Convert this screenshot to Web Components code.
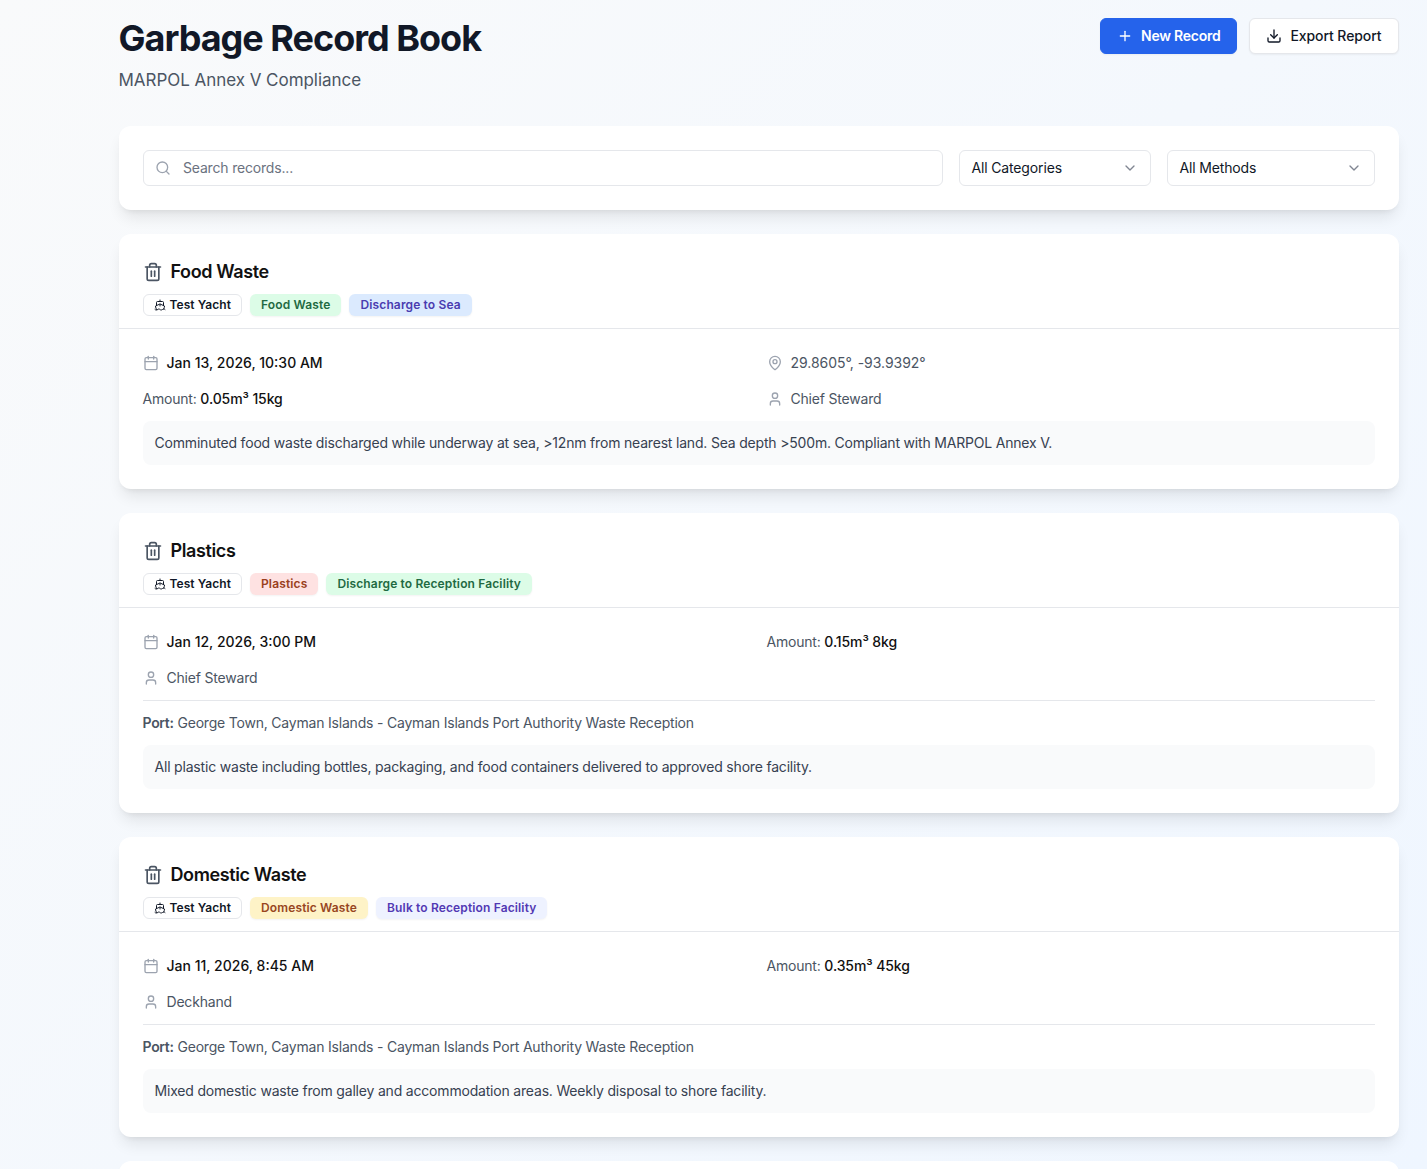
<!DOCTYPE html>
<html lang="en">
<head>
<meta charset="utf-8">
<title>Garbage Record Book</title>
<style>
	html, body { margin: 0; height: 1169px; overflow: hidden; }
	body {
		background: linear-gradient(135deg, #f9fafb 0%, #eff6ff 100%);
		font-family: Inter, "Liberation Sans", sans-serif;
		color: #111827;
	}
</style>
</head>
<body>
<record-book>
	<page-head slot="head" heading="Garbage Record Book" subtitle="MARPOL Annex V Compliance">
		<action-button variant="primary" icon="plus">New Record</action-button>
		<action-button icon="download">Export Report</action-button>
	</page-head>

	<filter-bar></filter-bar>

	<record-card heading="Food Waste">
		<tag-badge slot="badges" tone="outline" icon="ship">Test Yacht</tag-badge>
		<tag-badge slot="badges" tone="green">Food Waste</tag-badge>
		<tag-badge slot="badges" tone="blue">Discharge to Sea</tag-badge>
		<detail-grid>
			<detail-item icon="calendar" strong>Jan 13, 2026, 10:30 AM</detail-item>
			<detail-item icon="pin" numeric>29.8605°, -93.9392°</detail-item>
			<detail-item label="Amount:" strong>0.05m³ 15kg</detail-item>
			<detail-item icon="user">Chief Steward</detail-item>
		</detail-grid>
		<note-box>Comminuted food waste discharged while underway at sea, &gt;12nm from nearest land. Sea depth &gt;500m. Compliant with MARPOL Annex V.</note-box>
	</record-card>

	<record-card heading="Plastics">
		<tag-badge slot="badges" tone="outline" icon="ship">Test Yacht</tag-badge>
		<tag-badge slot="badges" tone="red">Plastics</tag-badge>
		<tag-badge slot="badges" tone="green">Discharge to Reception Facility</tag-badge>
		<detail-grid>
			<detail-item icon="calendar" strong>Jan 12, 2026, 3:00 PM</detail-item>
			<detail-item label="Amount:" strong>0.15m³ 8kg</detail-item>
			<detail-item icon="user">Chief Steward</detail-item>
		</detail-grid>
		<port-line>George Town, Cayman Islands - Cayman Islands Port Authority Waste Reception</port-line>
		<note-box>All plastic waste including bottles, packaging, and food containers delivered to approved shore facility.</note-box>
	</record-card>

	<record-card heading="Domestic Waste">
		<tag-badge slot="badges" tone="outline" icon="ship">Test Yacht</tag-badge>
		<tag-badge slot="badges" tone="amber">Domestic Waste</tag-badge>
		<tag-badge slot="badges" tone="indigo">Bulk to Reception Facility</tag-badge>
		<detail-grid>
			<detail-item icon="calendar" strong>Jan 11, 2026, 8:45 AM</detail-item>
			<detail-item label="Amount:" strong>0.35m³ 45kg</detail-item>
			<detail-item icon="user">Deckhand</detail-item>
		</detail-grid>
		<port-line>George Town, Cayman Islands - Cayman Islands Port Authority Waste Reception</port-line>
		<note-box>Mixed domestic waste from galley and accommodation areas. Weekly disposal to shore facility.</note-box>
	</record-card>

	<!-- next card only peeks in at the bottom of the window -->
	<record-card></record-card>
</record-book>

<script>
	const ICONS = {
		plus: '<path d="M5 12h14"/><path d="M12 5v14"/>',
		download: '<path d="M21 15v4a2 2 0 0 1-2 2H5a2 2 0 0 1-2-2v-4"/><polyline points="7 10 12 15 17 10"/><line x1="12" x2="12" y1="15" y2="3"/>',
		search: '<circle cx="11" cy="11" r="8"/><path d="m21 21-4.3-4.3"/>',
		chevron: '<path d="m6 9 6 6 6-6"/>',
		trash: '<path d="M3 6h18"/><path d="M19 6v14c0 1-1 2-2 2H7c-1 0-2-1-2-2V6"/><path d="M8 6V4c0-1 1-2 2-2h4c1 0 2 1 2 2v2"/><line x1="10" x2="10" y1="11" y2="17"/><line x1="14" x2="14" y1="11" y2="17"/>',
		ship: '<path d="M12 10.189V14"/><path d="M12 2v3"/><path d="M19 13V7a2 2 0 0 0-2-2H7a2 2 0 0 0-2 2v6"/><path d="M19.38 20A11.6 11.6 0 0 0 21 14l-8.188-3.639a2 2 0 0 0-1.624 0L3 14a11.6 11.6 0 0 0 2.81 7.76"/><path d="M2 21c.6.5 1.2 1 2.5 1 2.5 0 2.5-2 5-2 1.3 0 1.9.5 2.5 1s1.2 1 2.5 1c2.5 0 2.5-2 5-2 1.3 0 1.9.5 2.5 1"/>',
		calendar: '<path d="M8 2v4"/><path d="M16 2v4"/><rect width="18" height="18" x="3" y="4" rx="2"/><path d="M3 10h18"/>',
		pin: '<path d="M20 10c0 4.993-5.539 10.193-7.399 11.799a1 1 0 0 1-1.202 0C9.539 20.193 4 14.993 4 10a8 8 0 0 1 16 0"/><circle cx="12" cy="10" r="3"/>',
		user: '<path d="M19 21v-2a4 4 0 0 0-4-4H9a4 4 0 0 0-4 4v2"/><circle cx="12" cy="7" r="4"/>'
	};

	// small helper, every element below is just a template + shadow root
	class Base extends HTMLElement {
		render(html) {
			this.attachShadow({ mode: 'open' });
			this.shadowRoot.innerHTML = html;
		}
	}

	customElements.define('app-icon', class extends Base {
		constructor() {
			super();
			const size = this.getAttribute('size') || 16;
			this.render(`
				<style>
					:host { display: inline-flex; flex: none; width: ${size}px; height: ${size}px; }
					svg { display: block; }
				</style>
				<svg xmlns="http://www.w3.org/2000/svg" width="${size}" height="${size}" viewBox="0 0 24 24" fill="none" stroke="currentColor" stroke-width="2" stroke-linecap="round" stroke-linejoin="round">${ICONS[this.getAttribute('name')]}</svg>`);
		}
	});

	customElements.define('record-book', class extends Base {
		constructor() {
			super();
			this.render(`
				<style>
					:host {
						display: block;
						width: 1280px;
						margin-left: 118.5px;
						padding-top: 18px;
					}
					.list { display: flex; flex-direction: column; gap: 24px; }
				</style>
				<slot name="head"></slot>
				<div class="list"><slot></slot></div>`);
		}
	});

	customElements.define('page-head', class extends Base {
		constructor() {
			super();
			this.render(`
				<style>
					:host { display: flex; justify-content: space-between; align-items: flex-start; margin-bottom: 32px; }
					h1 { margin: 0; font-size: 36px; line-height: 40px; font-weight: 700; letter-spacing: -1px; color: #111827; }
					p { margin: 8px 0 0; font-size: 17px; line-height: 28px; letter-spacing: -0.04px; color: #4b5563; }
					.actions { display: flex; gap: 12px; }
				</style>
				<div>
					<h1>${this.getAttribute('heading')}</h1>
					<p>${this.getAttribute('subtitle')}</p>
				</div>
				<div class="actions"><slot></slot></div>`);
		}
	});

	customElements.define('action-button', class extends Base {
		constructor() {
			super();
			this.render(`
				<style>
					:host {
						display: inline-flex;
						align-items: center;
						gap: 8px;
						box-sizing: border-box;
						height: 36px;
						padding: 0 16px;
						border: 1px solid #e5e7eb;
						border-radius: 6px;
						background: #fff;
						box-shadow: 0 1px 2px rgba(0, 0, 0, .05);
						font-size: 14px;
						line-height: 20px;
						font-weight: 500;
						letter-spacing: -0.08px;
						color: #111827;
						white-space: nowrap;
					}
					:host([variant=primary]) {
						border-color: #2563eb;
						background: #2563eb;
						color: #fff;
						font-weight: 600;
						letter-spacing: -0.26px;
					}
				</style>
				<app-icon name="${this.getAttribute('icon')}"></app-icon>
				<slot></slot>`);
		}
	});

	customElements.define('filter-select', class extends Base {
		constructor() {
			super();
			this.render(`
				<style>
					:host {
						display: flex;
						align-items: center;
						justify-content: space-between;
						box-sizing: border-box;
						height: 36px;
						padding: 0 12px;
						border: 1px solid #e5e7eb;
						border-radius: 6px;
						background: #fff;
						font-size: 14px;
						line-height: 20px;
						letter-spacing: -0.15px;
						color: #111827;
					}
					app-icon { color: #6b7280; opacity: .85; }
				</style>
				<slot></slot>
				<app-icon name="chevron"></app-icon>`);
		}
	});

	customElements.define('filter-bar', class extends Base {
		constructor() {
			super();
			this.render(`
				<style>
					:host {
						display: grid;
						grid-template-columns: 1fr 192px 208px;
						gap: 16px;
						padding: 24px;
						border-radius: 12px;
						background: #fff;
						box-shadow: 0 10px 15px -3px rgba(0, 0, 0, .09), 0 4px 6px -4px rgba(0, 0, 0, .09);
					}
					.search {
						display: flex;
						align-items: center;
						gap: 12px;
						box-sizing: border-box;
						height: 36px;
						padding: 0 11.5px;
						border: 1px solid #e5e7eb;
						border-radius: 6px;
						font-size: 14px;
						line-height: 20px;
						letter-spacing: -0.18px;
						color: #6b7280;
					}
					.search app-icon { color: #9ca3af; }
				</style>
				<div class="search"><app-icon name="search"></app-icon><span>Search records...</span></div>
				<filter-select>All Categories</filter-select>
				<filter-select>All Methods</filter-select>`);
		}
	});

	customElements.define('tag-badge', class extends Base {
		constructor() {
			super();
			const icon = this.getAttribute('icon');
			this.render(`
				<style>
					:host {
						display: inline-flex;
						align-items: center;
						gap: 4px;
						box-sizing: border-box;
						height: 22px;
						padding: 0 10px;
						border: 1px solid transparent;
						border-radius: 6px;
						font-size: 12px;
						line-height: 16px;
						font-weight: 600;
						letter-spacing: 0.14px;
						white-space: nowrap;
						box-shadow: 0 1px 2px rgba(0, 0, 0, .05);
					}
					:host([tone=outline]) { border-color: #e5e7eb; background: #fff; color: #111827; box-shadow: none; letter-spacing: 0.06px; }
					:host([tone=green]) { background: #dcfce7; color: #1f6a42; }
					:host([tone=blue]) { background: #dbeafe; color: #4a3cb0; }
					:host([tone=red]) { background: #fee2e2; color: #9a4020; }
					:host([tone=amber]) { background: #fef3c7; color: #98461f; }
					:host([tone=indigo]) { background: #eef2ff; color: #5239b4; }
				</style>
				${icon ? `<app-icon name="${icon}" size="12"></app-icon>` : ''}
				<slot></slot>`);
		}
	});

	customElements.define('record-card', class extends Base {
		constructor() {
			super();
			const heading = this.getAttribute('heading');
			this.render(`
				<style>
					:host {
						display: block;
						border-radius: 12px;
						background: #fff;
						box-shadow: 0 10px 15px -3px rgba(0, 0, 0, .09), 0 4px 6px -4px rgba(0, 0, 0, .09);
						min-height: 120px;
					}
					header { padding: 24px 24px 12px; border-bottom: 1px solid #e5e7eb; }
					.title { display: flex; align-items: center; gap: 8px; margin-bottom: 8px; }
					.title app-icon { color: #4b5563; }
					h3 { margin: 0; font-size: 18px; line-height: 28px; font-weight: 600; letter-spacing: -0.38px; color: #111; }
					.badges { display: flex; gap: 8px; }
					.body { padding: 24px; }
				</style>
				${heading ? `
				<header>
					<div class="title"><app-icon name="trash" size="20"></app-icon><h3>${heading}</h3></div>
					<div class="badges"><slot name="badges"></slot></div>
				</header>
				<div class="body"><slot></slot></div>` : ''}`);
		}
	});

	customElements.define('detail-grid', class extends Base {
		constructor() {
			super();
			this.render(`
				<style>
					:host { display: grid; grid-template-columns: 1fr 1fr; gap: 16px; }
				</style>
				<slot></slot>`);
		}
	});

	customElements.define('detail-item', class extends Base {
		constructor() {
			super();
			const icon = this.getAttribute('icon');
			const label = this.getAttribute('label');
			this.render(`
				<style>
					:host {
						display: flex;
						align-items: center;
						gap: 8px;
						font-size: 14px;
						line-height: 20px;
						letter-spacing: -0.2px;
						color: #4b5563;
					}
					:host([numeric]) { letter-spacing: -0.05px; }
					:host([strong]) .val { color: #111; font-weight: 500; letter-spacing: 0; }
					:host([label][strong]) .val { letter-spacing: -0.1px; }
					app-icon { color: #9ca3af; }
				</style>
				${icon ? `<app-icon name="${icon}"></app-icon>` : ''}
				<div>${label ? label + ' ' : ''}<span class="val"><slot></slot></span></div>`);
		}
	});

	customElements.define('port-line', class extends Base {
		constructor() {
			super();
			this.render(`
				<style>
					:host {
						display: block;
						margin-top: 12px;
						padding-top: 12px;
						border-top: 1px solid #e5e7eb;
						font-size: 14px;
						line-height: 20px;
						letter-spacing: -0.2px;
						color: #4b5563;
					}
					b { font-weight: 600; letter-spacing: -0.3px; }
				</style>
				<b>Port:</b> <slot></slot>`);
		}
	});

	customElements.define('note-box', class extends Base {
		constructor() {
			super();
			this.render(`
				<style>
					:host {
						display: block;
						margin-top: 12px;
						padding: 12px;
						border-radius: 8px;
						background: #f9fafb;
						font-size: 14px;
						line-height: 20px;
						letter-spacing: -0.19px;
						color: #374151;
					}
				</style>
				<slot></slot>`);
		}
	});
</script>
</body>
</html>
